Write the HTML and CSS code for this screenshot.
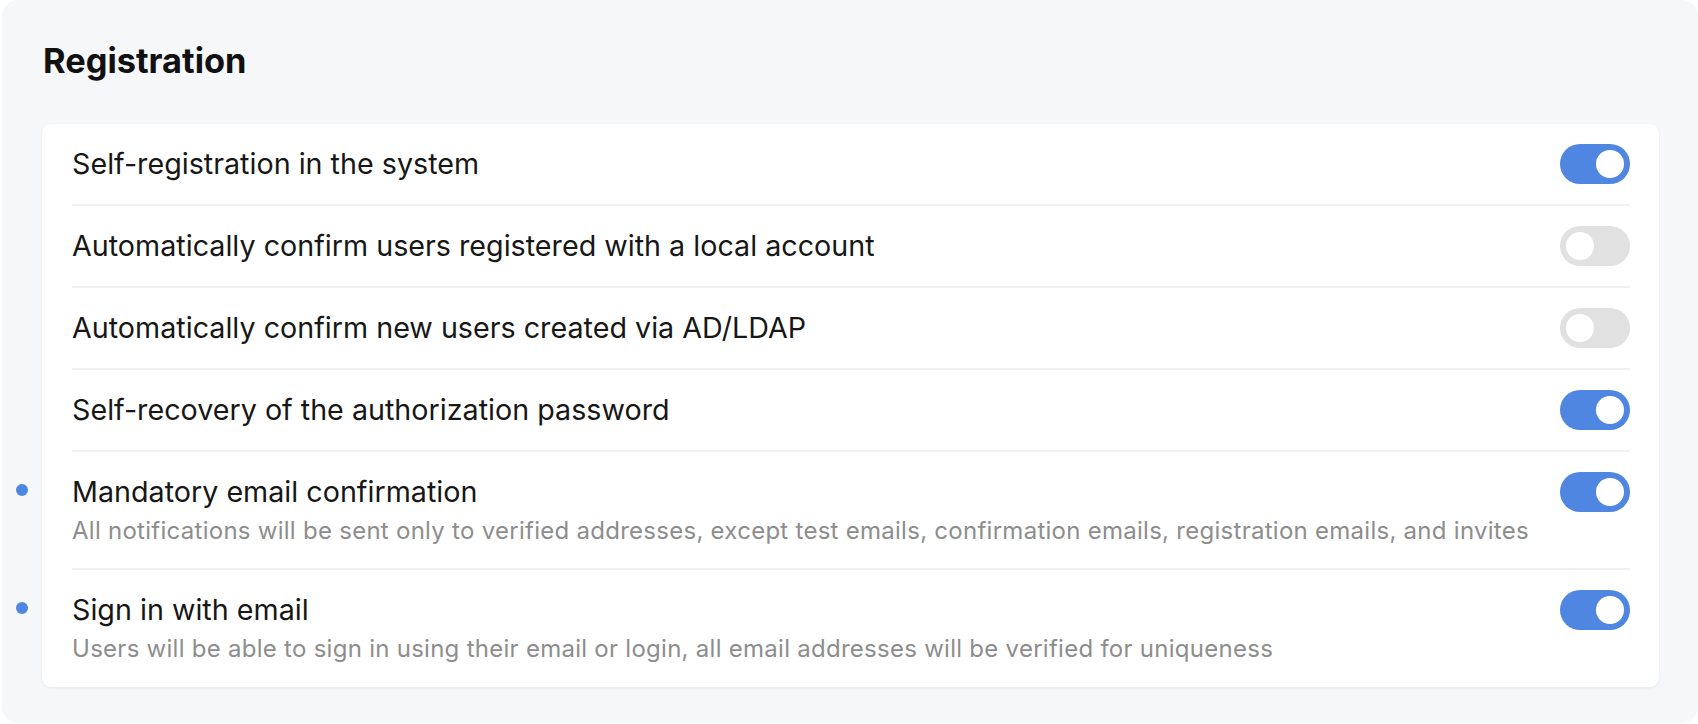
FILE: index.html
```html
<!DOCTYPE html>
<html lang="en">
<head>
<meta charset="utf-8">
<title>Registration</title>
<link rel="stylesheet" href="styles.css">
</head>
<body>
<section class="panel">
  <h2 class="panel-title">Registration</h2>
  <div class="card">
    <div class="row">
      <div class="row-text">
        <div class="row-title">Self-registration in the system</div>
      </div>
      <span class="toggle on"><span class="knob"></span></span>
    </div>
    <div class="row">
      <div class="row-text">
        <div class="row-title">Automatically confirm users registered with a local account</div>
      </div>
      <span class="toggle"><span class="knob"></span></span>
    </div>
    <div class="row">
      <div class="row-text">
        <div class="row-title">Automatically confirm new users created via AD/LDAP</div>
      </div>
      <span class="toggle"><span class="knob"></span></span>
    </div>
    <div class="row">
      <div class="row-text">
        <div class="row-title">Self-recovery of the authorization password</div>
      </div>
      <span class="toggle on"><span class="knob"></span></span>
    </div>
    <div class="row marked">
      <span class="dot"></span>
      <div class="row-text">
        <div class="row-title">Mandatory email confirmation</div>
        <div class="row-desc">All notifications will be sent only to verified addresses, except test emails, confirmation emails, registration emails, and invites</div>
      </div>
      <span class="toggle on"><span class="knob"></span></span>
    </div>
    <div class="row marked">
      <span class="dot"></span>
      <div class="row-text">
        <div class="row-title">Sign in with email</div>
        <div class="row-desc">Users will be able to sign in using their email or login, all email addresses will be verified for uniqueness</div>
      </div>
      <span class="toggle on"><span class="knob"></span></span>
    </div>
  </div>
</section>
</body>
</html>
```
FILE: styles.css
```css
* { box-sizing: border-box; }

html, body {
  margin: 0;
  padding: 0;
  background: #ffffff;
}

body {
  font-family: Inter, "Noto Sans", sans-serif;
  color: #161616;
}

.panel {
  margin: 0 0 0 2px;
  height: 723px;
  background: #f6f7f9;
  border-radius: 16px;
  padding: 41px 39px 0 40px;
}

.panel-title {
  margin: 0 0 43px 1px;
  font-size: 34.4px;
  line-height: 40px;
  font-weight: 700;
  color: #111111;
}

.card {
  background: #ffffff;
  border-radius: 9px;
  box-shadow: 0 1px 3px rgba(20, 30, 50, 0.07);
  padding: 0 29px 1px 30px;
}

.row {
  position: relative;
  display: flex;
  align-items: flex-start;
  justify-content: space-between;
  gap: 24px;
  padding: 20px 0;
  border-bottom: 2px solid #f0f0f0;
}

.row:last-child {
  border-bottom: none;
}

.row-text {
  flex: 1;
  min-width: 0;
}

.row-title {
  font-size: 28.7px;
  line-height: 40px;
  font-weight: 400;
  color: #171717;
}

.row-desc {
  margin-top: 1px;
  font-size: 24px;
  line-height: 35px;
  letter-spacing: 0.27px;
  color: #8d8d8d;
  white-space: nowrap;
}

.dot {
  position: absolute;
  left: -56px;
  top: 32px;
  width: 12px;
  height: 12px;
  border-radius: 50%;
  background: #4f86e1;
}

.toggle {
  flex: none;
  position: relative;
  display: block;
  width: 70px;
  height: 40px;
  border-radius: 20px;
  background: #e1e1e1;
}

.toggle.on {
  background: #4f86e1;
}

.knob {
  position: absolute;
  top: 6px;
  left: 6px;
  width: 28px;
  height: 28px;
  border-radius: 50%;
  background: #ffffff;
}

.toggle.on .knob {
  left: 36px;
}
```
